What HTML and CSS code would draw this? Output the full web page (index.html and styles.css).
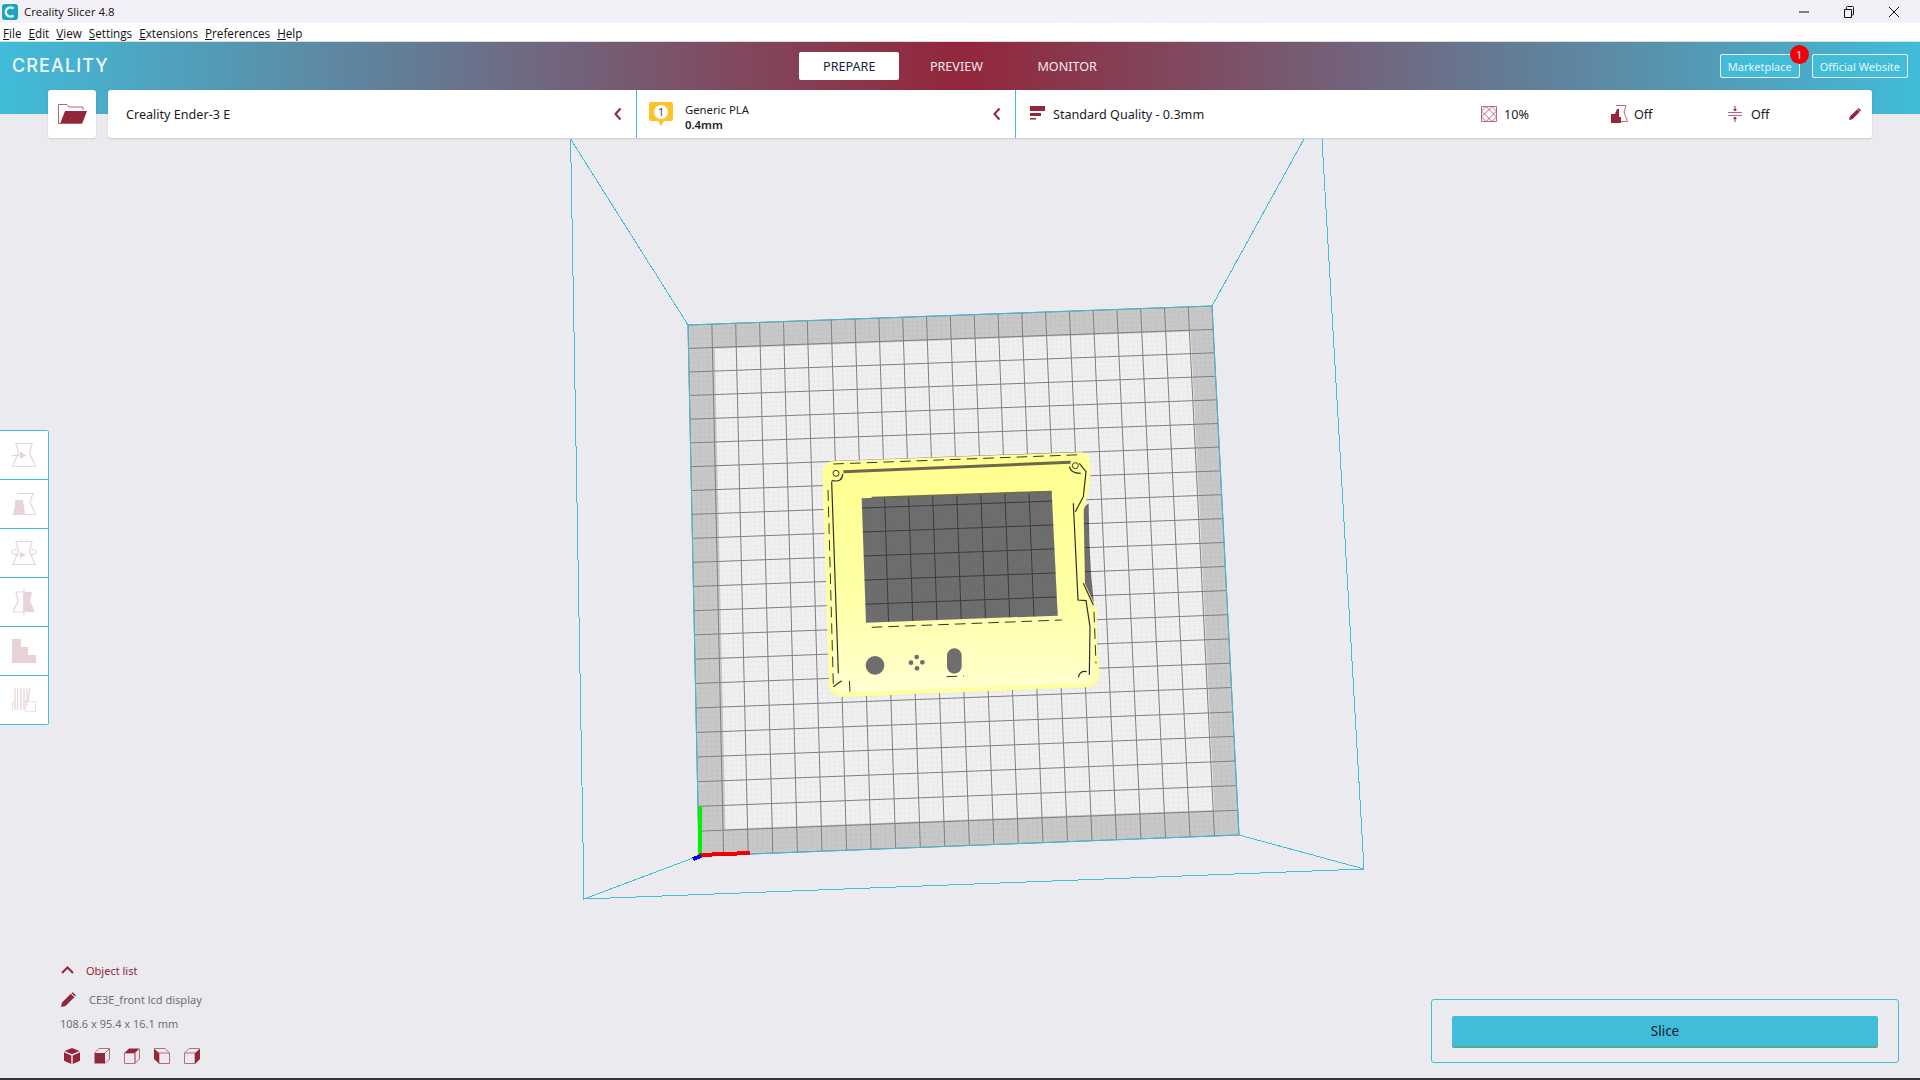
FILE: index.html
```html
<!DOCTYPE html>
<html lang="en">
  <head>
    <meta charset="UTF-8" />
    <title>Creality Slicer 4.8</title>
    <link rel="stylesheet" href="styles.css">
  </head>
  <body>
    <div class="window">

      <!-- Title bar -->
      <div class="titlebar">
        <svg class="app-icon" viewBox="0 0 16 16" width="16" height="16">
          <rect width="16" height="16" rx="3" fill="#1ea3bf" />
          <path d="M11.5 4.6A4.6 4.6 0 1 0 11.5 11.4" fill="none" stroke="#e8f8fb" stroke-width="2.4" />
        </svg>
        <span class="app-title">Creality Slicer 4.8</span>
        <div class="win-controls">
          <svg viewBox="0 0 12 12" width="12" height="12"><path d="M1 6H11" stroke="#111" fill="none" /></svg>
          <svg viewBox="0 0 12 12" width="12" height="12"><path d="M1.5 3.5H8.5V11.5H1.5ZM3.5 3.5V1.5Q3.5.5 4.5.5H9.5Q10.5.5 10.5 1.5V8Q10.5 9 9.5 9H8.5" stroke="#111" fill="none" /></svg>
          <svg viewBox="0 0 12 12" width="12" height="12"><path d="M1 1L11 11M11 1L1 11" stroke="#111" fill="none" /></svg>
        </div>
      </div>

      <!-- Menu -->
      <nav class="menubar">
        <span><u>F</u>ile</span>
        <span><u>E</u>dit</span>
        <span><u>V</u>iew</span>
        <span><u>S</u>ettings</span>
        <span><u>E</u>xtensions</span>
        <span><u>P</u>references</span>
        <span><u>H</u>elp</span>
      </nav>

      <!-- Header with stage tabs -->
      <header class="header">
        <div class="logo">CREALITY</div>
        <div class="tabs">
          <a class="tab active">PREPARE</a>
          <a class="tab">PREVIEW</a>
          <a class="tab">MONITOR</a>
        </div>
        <div class="header-links">
          <a class="link-btn">Marketplace<span class="badge">1</span></a>
          <a class="link-btn">Official Website</a>
        </div>
      </header>

      <!-- Printer / material / profile bar -->
      <div class="toolbar">
        <button class="open-btn">
          <svg viewBox="0 0 29 20" width="29" height="20">
            <path d="M.5 19.5V.5H9L11 3H25V6" fill="none" stroke="#b9616f" />
            <path d="M7 7H29L24 20H2Z" fill="#93263a" />
            <path d="M.5 1V19.5H24" fill="none" stroke="#b9616f" />
          </svg>
        </button>
        <div class="settings">
          <div class="section printer">
            <span>Creality Ender-3 E</span>
            <svg class="chevron" viewBox="0 0 8 14" width="8" height="14"><path d="M6.5 1.5L1.5 7L6.5 12.5" /></svg>
          </div>
          <div class="section material">
            <svg viewBox="0 0 24 24" width="24" height="24">
              <path d="M2 0H22Q24 0 24 2V17Q24 19 22 19H15L12 24L9 19H2Q0 19 0 17V2Q0 0 2 0Z" fill="#fdc32a" />
              <circle cx="12" cy="10" r="7" fill="#fff" />
              <text x="12" y="14" class="material-num">1</text>
            </svg>
            <div class="material-text">
              <span>Generic PLA</span>
              <strong>0.4mm</strong>
            </div>
            <svg class="chevron" viewBox="0 0 8 14" width="8" height="14"><path d="M6.5 1.5L1.5 7L6.5 12.5" /></svg>
          </div>
          <div class="section profile">
            <svg class="quality-icon" viewBox="0 0 16 16" width="16" height="16">
              <path d="M0 0H15V5H0ZM0 7H11V10H0ZM0 12H6V13.5H0Z" fill="#93263a" />
            </svg>
            <span class="quality">Standard Quality - 0.3mm</span>
            <div class="opt opt-infill">
              <svg viewBox="0 0 16 16" width="16" height="16">
                <path d="M.5.5H15.5V15.5H.5ZM.5 5L5 .5M11 .5L15.5 5M15.5 11L11 15.5M5 15.5L.5 11M5 .5L15.5 11M11 .5L.5 11M.5 5L11 15.5M15.5 5L5 15.5" fill="none" stroke="#bb6a78" />
              </svg>
              <span>10%</span>
            </div>
            <div class="opt opt-support">
              <svg viewBox="0 0 17 18" width="17" height="18">
                <path d="M5 .5H15L13 7L16.5 16.5H7" fill="none" stroke="#bb6a78" />
                <path d="M0 9H4L6 4H8V12H10V18H0Z" fill="#93263a" />
              </svg>
              <span>Off</span>
            </div>
            <div class="opt opt-adhesion">
              <svg viewBox="0 0 14 16" width="14" height="16">
                <path d="M0 6.5H14M0 9.5H14" stroke="#bb6a78" fill="none" />
                <path d="M7 0V4M7 12V16" stroke="#93263a" fill="none" />
                <path d="M5 3H9L7 5.5ZM5 13H9L7 10.5Z" fill="#93263a" />
              </svg>
              <span>Off</span>
            </div>
            <svg class="edit" viewBox="0 0 12 12" width="12" height="12">
              <path d="M0 12L.8 8.6L8.2 1.2L10.8 3.8L3.4 11.2ZM9 .4Q9.6-.2 10.2.4L11.6 1.8Q12.2 2.4 11.6 3L11.2 3.4L8.6.8Z" fill="#93263a" />
            </svg>
          </div>
        </div>
      </div>

      <!-- Build volume and overlays -->
      <main class="stage">
        <svg class="scene" viewBox="0 114 1920 964" width="1920" height="964">
          <g id="plate"></g>

          <g class="wire">
            <path d="M570.6 139L688 325M570.6 139L584 899L1364 869L1322 139M1304 139L1212 306M584 899L693 858M1364 869L1239 835" />
          </g>

          <!-- axes -->
          <g class="axes">
            <path d="M700 855V807" stroke="#00f000" stroke-width="4" />
            <path d="M700 855L750 853" stroke="#f00000" stroke-width="4" />
            <path d="M701 856L693 859" stroke="#0000f0" stroke-width="4" />
          </g>

          <!-- printed model, coordinates taken at 3x from 800,440 -->
          <g transform="translate(800 440) scale(.33333)">
            <defs>
              <linearGradient id="modelFill" x1="0" y1="0" x2="0" y2="1">
                <stop offset="0" stop-color="#ffff8e" />
                <stop offset="0.6" stop-color="#ffffa6" />
                <stop offset="1" stop-color="#ffffd2" />
              </linearGradient>
            </defs>
            <path class="shadow" d="M848 205L866 190L868 300L873 400L882 495L850 440Z" />
            <path fill="url(#modelFill)" fill-rule="evenodd" d="M95 67L845 40Q868 43 868 70L868 130L848 212L852 432L888 510L888 620L896 705Q892 735 865 738L125 768Q95 765 90 735L82 450L70 95Q72 70 95 67ZM185 175L755 153L773 527L198 548Z" />
            <path fill="none" stroke="#ffff9c" stroke-width="12" d="M95 70L845 43Q865 46 865 70L865 130L845 212L849 432L885 510L885 620L893 705Q889 732 865 735L125 765Q98 762 93 735L85 450L73 95Q75 73 95 70Z" />
            <path class="shadow" d="M185 175L755 153L773 527L198 548Z" />
            <path d="M215 173L755 155" stroke="#716c4f" stroke-width="6" fill="none" />
            <path d="M130 95L812 67" stroke="#6c6850" stroke-width="9" fill="none" />

            <circle cx="225" cy="676" r="28" fill="#6e6e6e" />
            <circle cx="350" cy="651" r="7" fill="#6e6e6e" />
            <circle cx="333" cy="668" r="7" fill="#6e6e6e" />
            <circle cx="367" cy="667" r="7" fill="#6e6e6e" />
            <circle cx="351" cy="685" r="7" fill="#6e6e6e" />
            <rect x="441" y="625" width="44" height="76" rx="22" fill="#6e6e6e" />

            <g class="walls">
              <path d="M95 125L115 700" />
              <path d="M838 70L858 95L850 170L826 215" />
              <path d="M820 190L834 480L858 482L870 560L868 705" />
              <path d="M850 430L880 495" />
              <path d="M95 122Q128 128 128 102" />
              <path d="M808 80Q812 100 842 100" />
              <path d="M835 712Q840 690 860 695" />
              <path d="M100 740L125 722" />
            </g>
            <g class="dashes">
              <path d="M100 72L845 44" />
              <path d="M215 562L785 540" />
              <path d="M84 150L100 735" />
              <path d="M882 515L888 670" />
              <path d="M150 755L148 720" />
              <path d="M440 710L492 708" />
            </g>
            <circle cx="108" cy="100" r="9" fill="none" stroke="#333" stroke-width="3" />
            <circle cx="826" cy="77" r="9" fill="none" stroke="#333" stroke-width="3" />
          </g>
        </svg>

        <div class="stage-ui">
          <div class="side-tools">
            <button class="tool">
              <svg viewBox="0 0 24 24" width="24" height="24"><path d="M4 .5H20L17.5 10L23.5 23.5H.5L6.5 10Z" class="line" /><path d="M0 12.5H9" class="line" /><path d="M8 8.5L14 12.5L8 16Z" class="solid" /></svg>
            </button>
            <button class="tool">
              <svg viewBox="0 0 24 24" width="24" height="24"><path d="M5 1.500H21L18 10L23.500 22.500H13" class="line" /><path d="M3 8H11L13 23H.5L3 15Z" class="solid" /></svg>
            </button>
            <button class="tool">
              <svg viewBox="0 0 26 24" width="26" height="24"><path d="M5 .5H21L18.5 10L24 23.5H2L7.5 10Z" class="line" /><path d="M6 8Q.5 9 .5 10Q.5 13 6 14M20 8Q25.5 9 25.5 10Q25.5 13 20 14M6 14H12" class="line" /><path d="M9 11L15 14L9 17Z" class="solid" /></svg>
            </button>
            <button class="tool">
              <svg viewBox="0 0 22 26" width="22" height="26"><path d="M3 3H11V23H0L5 12Z" class="line" /><path d="M11 3H19L17 12L22 23H11Z" class="solid" /><path d="M11 0V26" class="line" /></svg>
            </button>
            <button class="tool">
              <svg viewBox="0 0 24 24" width="24" height="24"><path d="M0 0H9V8H16V16H24V24H0Z" class="solid" /></svg>
            </button>
            <button class="tool">
              <svg viewBox="0 0 24 26" width="24" height="26"><path d="M3 1V23M5.500 1V23M9 1V23M12 1V23M15 1V19M18 1L16 14M1 15L0 23" class="line" /><rect x="13.500" y="14.500" width="10" height="10" class="line dashed" /></svg>
            </button>
          </div>

          <div class="bottom-row">
            <section class="object-info">
              <div class="object-head">
                <svg viewBox="0 0 13 8" width="13" height="8"><path d="M1 7L6.500 1.500L12 7" fill="none" stroke="#93263a" stroke-width="2" /></svg>
                <span>Object list</span>
              </div>
              <div class="object-name">
                <svg viewBox="0 0 15 15" width="15" height="15"><path d="M0 15L1 10.500L9.800 1.700L13.300 5.200L4.500 14ZM10.800.700Q11.600 0 12.300.700L14.300 2.700Q15 3.400 14.300 4.200L13.900 4.600L10.400 1.100Z" fill="#93263a" /></svg>
                <span>CE3E_front lcd display</span>
              </div>
              <div class="object-size">108.6 x 95.4 x 16.1 mm</div>
              <div class="view-cubes">
                <svg viewBox="0 0 16 16" width="16" height="16"><path d="M8 0L15.500 3L8 6.300L.5 3ZM0 4.300L7.300 7.500V16L0 12.800ZM16 4.300L8.700 7.500V16L16 12.800Z" class="solid-cube" /></svg>
                <svg viewBox="0 0 16 16" width="16" height="16"><path d="M.5 5H11V15.500H.5Z" class="solid-cube" /><path d="M.5 5L5 .5H15.500V11L11 15.500M11 5L15.500 .5" class="wire-cube" /></svg>
                <svg viewBox="0 0 16 16" width="16" height="16"><path d="M.5 5H11V15.500H.5ZM11 5V15.500L15.500 11V1" class="wire-cube" /><path d="M.5 5L5 .5H15.500L11 5Z" class="solid-cube" /></svg>
                <svg viewBox="0 0 16 16" width="16" height="16"><path d="M5 5H15.500V15.500H5ZM0 .5H11L15.500 5" class="wire-cube" /><path d="M0 .5L5 5V15.500L0 11Z" class="solid-cube" /></svg>
                <svg viewBox="0 0 16 16" width="16" height="16"><path d="M.5 5H11V15.500H.5ZM.5 5L5 .5H15.500" class="wire-cube" /><path d="M11 5L16 .5V11L11 16Z" class="solid-cube" /></svg>
              </div>
            </section>

            <section class="slice-panel">
              <button class="slice-btn">Slice</button>
            </section>
          </div>
        </div>
      </main>

      <div class="bottom-edge"></div>
    </div>

    <script src="scene.js"></script>
  </body>
</html>
```

FILE: styles.css
```css
:root {
  --teal: #41bcd9;
  --wine: #93263a;
  --bg: #eaeaef;
  --text: #1b1b24;
  --grey-text: #6f6f78;
  --pale: #e8d3d7;
}

* {
  box-sizing: border-box;
}

body {
  margin: 0;
  overflow: hidden;
  background: var(--bg);
  color: var(--text);
  font-family: "Noto Sans", "Open Sans", sans-serif;
}

button {
  font-family: inherit;
  border: 0;
  padding: 0;
}

.window {
  height: 100vh;
  display: flex;
  flex-direction: column;
}

/* title bar */
.titlebar {
  height: 23px;
  flex: none;
  display: flex;
  align-items: center;
  padding-left: 2px;
  background: linear-gradient(90deg, #f3f0f7, #f0f2f7);
}

.app-title {
  margin-left: 6px;
  font-family: "Open Sans", sans-serif;
  font-size: 11.4px;
  color: #111;
}

.win-controls {
  margin-left: auto;
  display: flex;
  gap: 33px;
  padding-right: 20px;
}

/* menu */
.menubar {
  height: 19px;
  flex: none;
  display: flex;
  gap: 7px;
  align-items: center;
  padding: 1px 0 0 3px;
  background: #fff;
  border-bottom: 1px solid #dcdcdc;
  font-family: "Open Sans", sans-serif;
  font-size: 11.7px;
  color: #111;
}

/* header */
.header {
  height: 72px;
  flex: none;
  display: grid;
  grid-template-columns: 1fr auto 1fr;
  background: linear-gradient(90deg, var(--teal), var(--wine) 50%, var(--teal));
}

.logo {
  padding: 13px 0 0 12px;
  font-family: Inter, sans-serif;
  font-size: 18px;
  line-height: 22px;
  font-weight: 500;
  letter-spacing: 1.1px;
  color: #eef9fb;
}

.tabs {
  display: flex;
  gap: 6.5px;
  padding-top: 10px;
  align-items: flex-start;
}

.tab {
  height: 28px;
  line-height: 29px;
  padding: 0 24px;
  font-size: 12.6px;
  color: #f3e9ee;
  border-radius: 2px;
}

.tab.active {
  background: #fff;
  color: #17234e;
}

.header-links {
  display: flex;
  justify-content: flex-end;
  align-items: flex-start;
  gap: 12px;
  padding: 12px 12px 0 0;
}

.link-btn {
  position: relative;
  height: 24px;
  line-height: 24px;
  padding: 0 7px;
  font-size: 11px;
  color: #e6f7fb;
  border: 1px solid #eef9fb;
  border-radius: 2px;
  background: var(--teal);
  white-space: nowrap;
}

.badge {
  position: absolute;
  top: -10px;
  right: -10px;
  width: 19px;
  height: 19px;
  line-height: 19px;
  border-radius: 50%;
  background: #f00008;
  color: #ffe9e9;
  font-size: 11px;
  text-align: center;
}

/* toolbar */
.toolbar {
  position: relative;
  z-index: 1;
  height: 48px;
  flex: none;
  margin: -24px 48px -24px 48px;
  display: flex;
  gap: 12px;
}

.open-btn {
  width: 48px;
  background: #fff;
  border-radius: 3px;
  box-shadow: 0 1px 2px rgba(0, 0, 0, 0.12);
  display: flex;
  align-items: center;
  justify-content: center;
}

.settings {
  flex: 1;
  display: flex;
  background: #fff;
  border-radius: 3px;
  box-shadow: 0 1px 2px rgba(0, 0, 0, 0.14);
}

.section {
  display: flex;
  align-items: center;
  font-size: 12.6px;
  border-right: 1px solid var(--teal);
}

.chevron {
  fill: none;
  stroke: var(--wine);
  stroke-width: 2;
}

.printer {
  width: 529px;
  padding: 0 14px 0 18px;
  justify-content: space-between;
}

.material {
  width: 379px;
  padding: 0 14px 0 12px;
}

.material-num {
  font-size: 10px;
  text-anchor: middle;
  fill: #333;
}

.material-text {
  flex: 1;
  margin-left: 12px;
  padding-top: 5px;
  display: flex;
  flex-direction: column;
  font-size: 11.3px;
  line-height: 15px;
}

.material-text strong {
  font-weight: 600;
}

.profile {
  flex: 1;
  padding-left: 14px;
  border-right: 0;
}

.quality {
  margin-left: 7px;
  width: 428px;
}

.opt {
  display: flex;
  align-items: center;
  font-size: 12.6px;
}

.opt-infill {
  width: 130px;
  gap: 7px;
}

.opt-support {
  width: 117px;
  gap: 6px;
}

.opt-adhesion {
  width: 121px;
  gap: 9px;
}

/* 3d stage */
.stage {
  position: relative;
  flex: 1;
  min-height: 0;
}

.scene {
  position: absolute;
  top: 0;
  left: 0;
}

.wire path {
  fill: none;
  stroke: var(--teal);
  stroke-width: 1;
  shape-rendering: crispEdges;
}

.axes path {
  fill: none;
  shape-rendering: crispEdges;
}

.shadow {
  fill: rgba(0, 0, 0, 0.54);
}

.walls path {
  fill: none;
  stroke: #2c2c2c;
  stroke-width: 3.500;
}

.dashes path {
  fill: none;
  stroke: #333;
  stroke-width: 3;
  stroke-dasharray: 32 18;
}

.stage-ui {
  position: relative;
  height: 100%;
  display: flex;
  flex-direction: column;
  justify-content: space-between;
}

.side-tools {
  width: 49px;
  margin-top: 316px;
  background: #fff;
  border: 1px solid var(--teal);
  border-left: 0;
  border-radius: 0 3px 3px 0;
}

.tool {
  display: flex;
  align-items: center;
  justify-content: center;
  width: 48px;
  height: 49px;
  background: #fff;
  border-bottom: 1px solid var(--teal);
}

.tool:last-child {
  height: 48px;
  border-bottom: 0;
}

.line {
  fill: none;
  stroke: var(--pale);
  stroke-width: 1.200;
}

.dashed {
  stroke-dasharray: 2 1;
}

.solid {
  fill: var(--pale);
}

.bottom-row {
  display: flex;
  justify-content: space-between;
  align-items: flex-end;
  padding: 0 21px 15px 60px;
}

.object-info {
  font-size: 11px;
  color: var(--grey-text);
}

.object-head,
.object-name {
  display: flex;
  align-items: center;
  height: 20px;
}

.object-head {
  gap: 12px;
  padding-left: 1px;
  color: var(--wine);
}

.object-name {
  gap: 13px;
  margin-top: 9px;
  padding-left: 1px;
}

.object-size {
  height: 16px;
  line-height: 16px;
  margin-top: 7px;
}

.view-cubes {
  display: flex;
  gap: 14px;
  height: 16px;
  margin: 16px 0 -1px;
  padding-left: 4px;
}

.solid-cube {
  fill: var(--wine);
}

.wire-cube {
  fill: none;
  stroke: #bb6a78;
}

.slice-panel {
  width: 468px;
  height: 64px;
  padding: 16px 20px;
  border: 1px solid var(--teal);
  border-radius: 3px;
}

.slice-btn {
  display: block;
  width: 426px;
  height: 32px;
  background: var(--teal);
  border-bottom: 2px solid #58a89c;
  border-radius: 2px;
  font-size: 13.5px;
  color: #10202a;
}

.bottom-edge {
  height: 2px;
  flex: none;
  background: #34343a;
}
```

FILE: scene.js
```js
// build plate grid, projected from the 22 x 22 cell bed to its screen corners
const corners = [[688, 325], [1212, 306], [1239, 835], [699, 856]];
const CELLS = 22;

function makeProjection(p) {
  const dx1 = p[1][0] - p[2][0], dx2 = p[3][0] - p[2][0];
  const dx3 = p[0][0] - p[1][0] + p[2][0] - p[3][0];
  const dy1 = p[1][1] - p[2][1], dy2 = p[3][1] - p[2][1];
  const dy3 = p[0][1] - p[1][1] + p[2][1] - p[3][1];
  const det = dx1 * dy2 - dx2 * dy1;
  const g = (dx3 * dy2 - dx2 * dy3) / det;
  const h = (dx1 * dy3 - dx3 * dy1) / det;
  const a = p[1][0] - p[0][0] + g * p[1][0];
  const b = p[3][0] - p[0][0] + h * p[3][0];
  const d = p[1][1] - p[0][1] + g * p[1][1];
  const e = p[3][1] - p[0][1] + h * p[3][1];

  return (u, v) => {
    const w = g * u + h * v + 1;
    return [(a * u + b * v + p[0][0]) / w, (d * u + e * v + p[0][1]) / w];
  };
}

const project = makeProjection(corners);

function pt(u, v) {
  const [x, y] = project(u, v);
  return `${x.toFixed(1)} ${y.toFixed(1)}`;
}

function quad(u0, v0, u1, v1) {
  return `M${pt(u0, v0)}L${pt(u1, v0)}L${pt(u1, v1)}L${pt(u0, v1)}Z`;
}

function gridPath(steps) {
  let d = "";
  for (let i = 0; i <= steps; i++) {
    const t = i / steps;
    d += `M${pt(t, 0)}L${pt(t, 1)}M${pt(0, t)}L${pt(1, t)}`;
  }
  return d;
}

const cell = 1 / CELLS;

document.getElementById("plate").innerHTML = `
  <path d="${quad(0, 0, 1, 1)}" fill="#c8c8c8" />
  <path d="${quad(cell * 1.1, cell * 1.05, 1 - cell * 0.95, 1 - cell * 1.05)}" fill="#f0f0f0" />
  <path d="${gridPath(CELLS * 5)}" fill="none" stroke="#000" stroke-opacity="0.022" stroke-width="1" />
  <path d="${gridPath(CELLS)}" fill="none" stroke="#808080" stroke-width="1" />
  <path d="${quad(0, 0, 1, 1)}" fill="none" stroke="#41bcd9" stroke-width="1" />
`;
```
